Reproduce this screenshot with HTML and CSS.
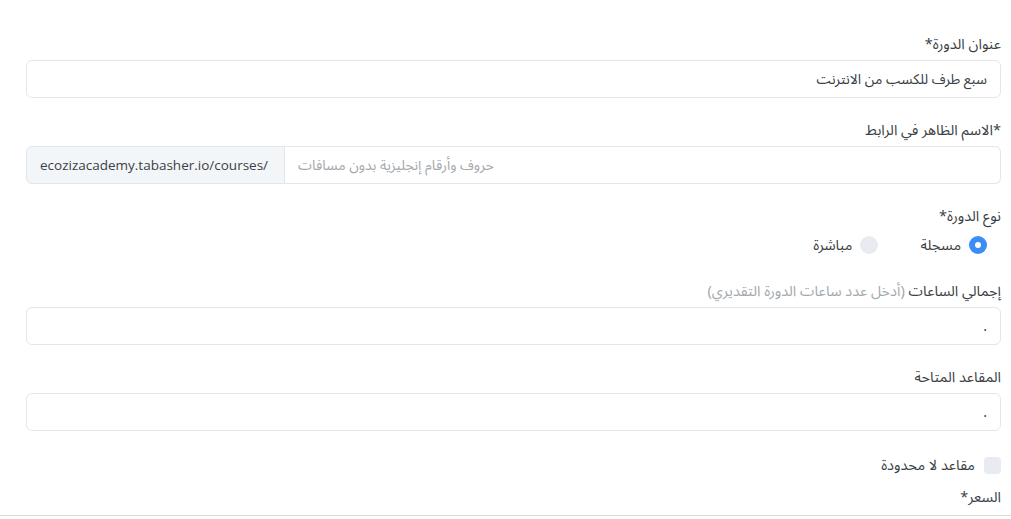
FILE: index.html
```html
<!DOCTYPE html>
<html lang="ar" dir="rtl">
<head>
<meta charset="utf-8">
<link rel="stylesheet" href="styles.css">
</head>
<body>
<form class="form">
  <div class="group">
    <label class="label">عنوان الدورة*</label>
    <div class="input filled">سبع طرف للكسب من الانترنت</div>
  </div>
  <div class="group">
    <label class="label">*الاسم الظاهر في الرابط</label>
    <div class="input-group">
      <span class="addon">ecozizacademy.tabasher.io/courses/</span>
      <div class="input joined placeholder">حروف وأرقام إنجليزية بدون مسافات</div>
    </div>
  </div>
  <div class="group radio-group">
    <label class="label">نوع الدورة*</label>
    <div class="radios">
      <span class="radio"><span class="dot on"></span>مسجلة</span>
      <span class="radio"><span class="dot"></span>مباشرة</span>
    </div>
  </div>
  <div class="group">
    <label class="label">إجمالي الساعات <span class="hint">(أدخل عدد ساعات الدورة التقديري)</span></label>
    <div class="input filled">.</div>
  </div>
  <div class="group">
    <label class="label">المقاعد المتاحة</label>
    <div class="input filled">.</div>
  </div>
  <div class="check"><span class="box"></span>مقاعد لا محدودة</div>
  <label class="label price">السعر*</label>
</form>
<div class="edge"></div>
</body>
</html>
```
FILE: styles.css
```css
* { box-sizing: border-box; }
html, body { margin: 0; padding: 0; background: #fff; }
body {
  font-family: "Noto Sans Arabic", "Noto Sans", "DejaVu Sans", sans-serif;
  font-size: 14px;
  color: #3a3f45;
  width: 1011px;
  height: 519px;
  overflow: hidden;
  position: relative;
}
.form {
  padding: 34px 10px 0 26px;
  display: flex;
  flex-direction: column;
}
.group { display: flex; flex-direction: column; margin-bottom: 22px; }
.label {
  display: block;
  font-size: 14.5px;
  line-height: 22px;
  margin-bottom: 4px;
  color: #3a3f45;
}
.hint { color: #a4a9ae; }
.input {
  height: 38px;
  border: 1px solid #e4e6ea;
  border-radius: 6px;
  padding: 0 13px;
  display: flex;
  align-items: center;
  font-size: 14px;
  color: #3a3f45;
  background: #fff;
}
.input-group {
  display: flex;
  direction: ltr;
  height: 38px;
}
.addon {
  width: 259px;
  flex: none;
  display: flex;
  align-items: center;
  padding: 0 13px;
  background: #f3f6f9;
  border: 1px solid #e4e6ea;
  border-radius: 6px 0 0 6px;
  font-family: "Open Sans", "Noto Sans", sans-serif;
  font-size: 13.5px;
  color: #3a3f45;
}
.input.joined {
  flex: 1;
  height: 38px;
  border-left: none;
  border-radius: 0 6px 6px 0;
  justify-content: flex-start;
}
.placeholder { color: #a4a9ae; }
.radio-group { margin-bottom: 23px; }
.radios {
  display: flex;
  gap: 42px;
  height: 26px;
  align-items: center;
  padding-right: 14px;
}
.radio { display: flex; align-items: center; gap: 8px; font-size: 14.5px; }
.dot {
  width: 18px; height: 18px; border-radius: 50%;
  background: #e8ecf0;
  display: inline-block;
  position: relative;
}
.dot.on { background: #3b8ef6; }
.dot.on::after {
  content: ""; position: absolute; left: 6px; top: 6px;
  width: 6px; height: 6px; border-radius: 50%; background: #fff;
}
.check {
  display: flex; align-items: center; gap: 9px;
  height: 22px; margin-top: 1px; font-size: 14.5px;
}
.box { width: 17px; height: 17px; border-radius: 4px; background: #e8ecf0; display: inline-block; }
.price { margin-top: 11px; }
.edge {
  position: absolute; left: 0; right: 0; top: 515px; height: 1px; background: #dcdcdc;
}
```
